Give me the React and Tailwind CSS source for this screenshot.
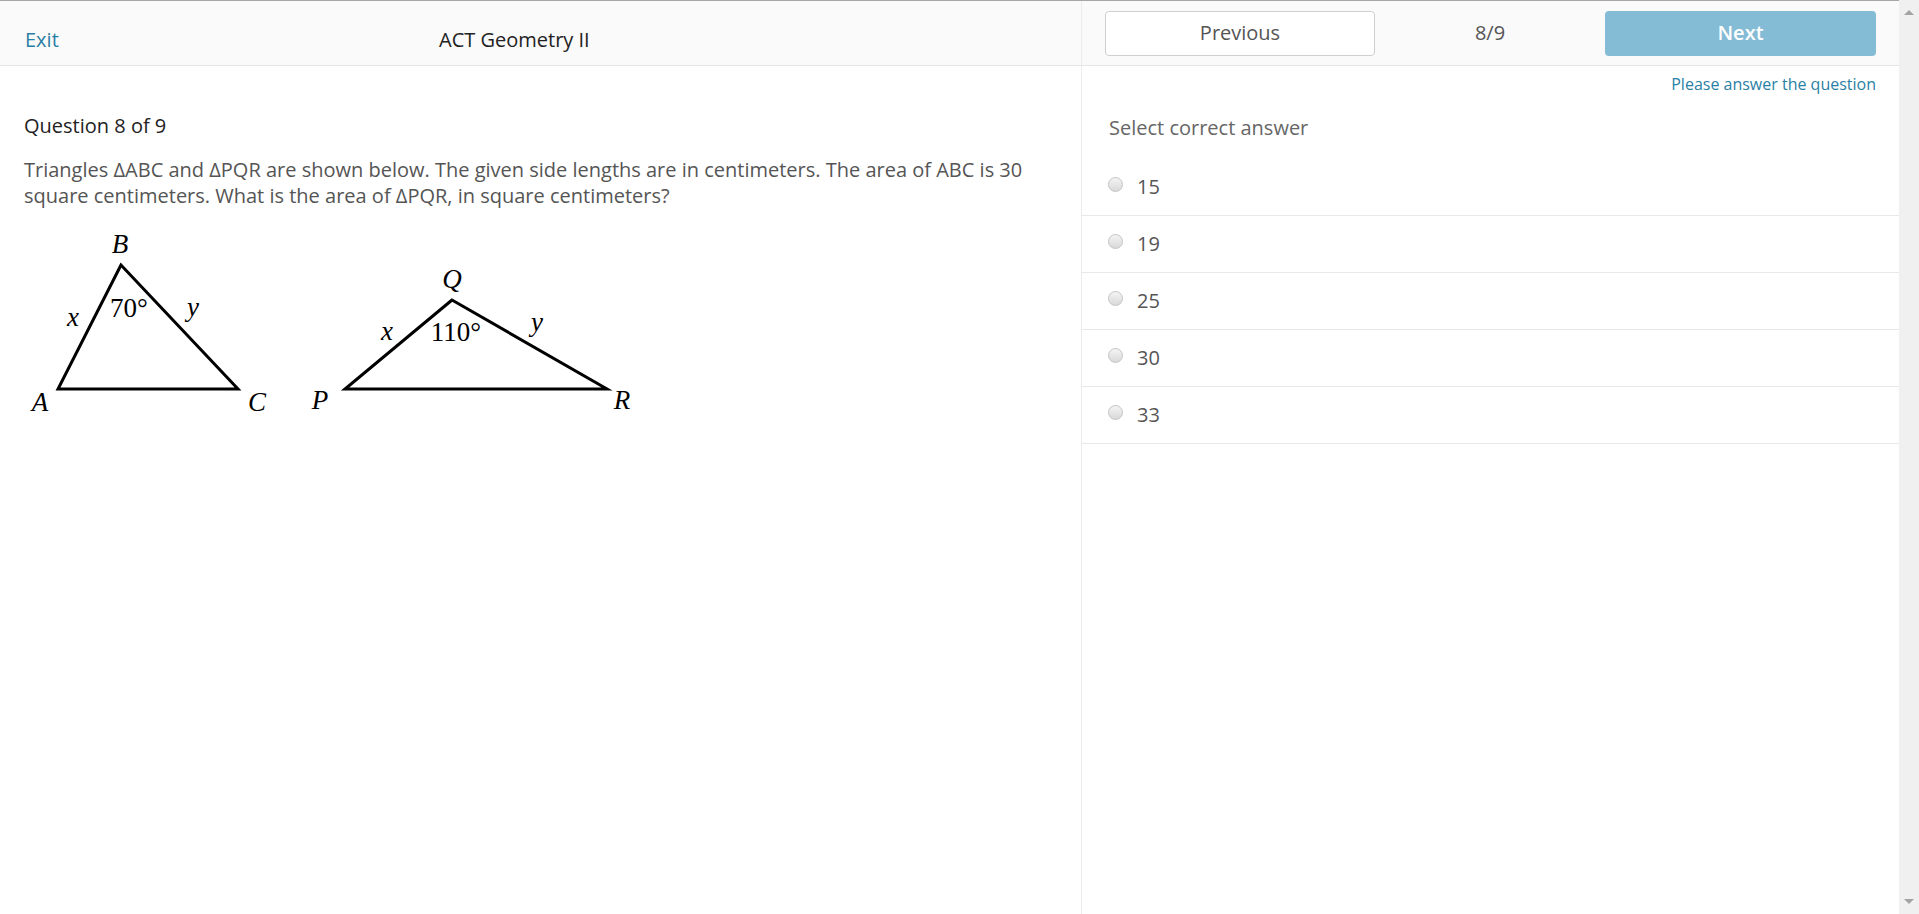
import React from "react";

const answers = ["15", "19", "25", "30", "33"];

const Triangles = () => (
	<svg width="660" height="200" viewBox="0 230 660 200" className="block">
		<g fill="none" stroke="#000" strokeWidth="3" strokeLinejoin="miter">
			<polygon points="121,265 58,389 238,389" />
			<polygon points="452,300 345,389 607,389" />
		</g>
		<g fontFamily="'Liberation Serif', serif" fill="#000" textAnchor="middle" fontSize="27">
			<text x="120" y="253" fontStyle="italic">B</text>
			<text x="40" y="411" fontStyle="italic">A</text>
			<text x="257" y="411" fontStyle="italic">C</text>
			<text x="73" y="326" fontStyle="italic">x</text>
			<text x="193" y="316" fontStyle="italic">y</text>
			<text x="129" y="317">70°</text>
			<text x="452" y="288" fontStyle="italic">Q</text>
			<text x="320" y="409" fontStyle="italic">P</text>
			<text x="622" y="409" fontStyle="italic">R</text>
			<text x="387" y="340" fontStyle="italic">x</text>
			<text x="537" y="331" fontStyle="italic">y</text>
			<text x="456" y="341">110°</text>
		</g>
	</svg>
);

const Radio = () => (
	<span className="w-[15px] h-[15px] rounded-full border border-[#c4c4c4] bg-gradient-to-b from-[#f4f4f4] to-[#d9d9d9] shrink-0 -mt-[6px]"></span>
);

export default function App() {
	return (
		<div className="h-[914px] flex overflow-hidden bg-white font-['Open_Sans',sans-serif]">
			<div className="flex-1 flex flex-col border-t border-[#a6a6a6]">
				{/* top bar */}
				<div className="h-[65px] flex bg-[#fafafa] border-b border-[#e6e6e6] shrink-0">
					<div className="w-[1081px] flex items-center pl-[25px] pt-[13px] text-[20px]">
						<span className="w-[414px] text-[#2a7fa5]">Exit</span>
						<span className="text-[#222]">ACT Geometry II</span>
					</div>
					<div className="flex-1 border-l border-[#ececec] flex items-center justify-between px-[23px]">
						<button className="w-[270px] h-[45px] bg-white border border-[#cfcfcf] rounded-[4px] text-[20px] text-[#555]">
							Previous
						</button>
						<span className="text-[20px] text-[#555]">8/9</span>
						<button className="w-[271px] h-[45px] bg-[#84bbd5] rounded-[4px] text-[20px] font-semibold text-white">
							Next
						</button>
					</div>
				</div>

				{/* body */}
				<div className="flex-1 flex">
					<div className="w-[1081px] pl-[24px] pr-[30px]">
						<h2 className="text-[20px] text-[#222] mt-[47px] leading-[26px]">Question 8 of 9</h2>
						<p className="text-[20px] text-[#555] leading-[26px] mt-[18px]">
							Triangles ΔABC and ΔPQR are shown below. The given side lengths are in centimeters. The area of ABC is 30 square centimeters. What is the area of ΔPQR, in square centimeters?
						</p>
						<div className="-ml-[24px] mt-[21px]">
							<Triangles />
						</div>
					</div>
					<div className="flex-1 border-l border-[#ececec] flex flex-col">
						<div className="h-[93px] flex flex-col">
							<div className="text-right pr-[23px] pt-[6px] text-[16px] text-[#2a7fa5] leading-[24px]">
								Please answer the question
							</div>
							<div className="pl-[27px] mt-[19px] text-[20px] text-[#666] leading-[26px]">Select correct answer</div>
						</div>
						{answers.map((a) => (
							<label key={a} className="h-[57px] flex items-center gap-[14px] pl-[26px] border-b border-[#e8e8e8] text-[20px] text-[#555]">
								<Radio />
								<span>{a}</span>
							</label>
						))}
					</div>
				</div>
			</div>

			{/* scrollbar */}
			<div className="w-[20px] bg-[#f0f0f0] flex flex-col items-center justify-between py-[10px]">
				<span className="w-0 h-0 border-l-[5px] border-r-[5px] border-b-[5px] border-l-transparent border-r-transparent border-b-[#a3a3a3]"></span>
				<span className="w-0 h-0 border-l-[5px] border-r-[5px] border-t-[5px] border-l-transparent border-r-transparent border-t-[#a3a3a3]"></span>
			</div>
		</div>
	);
}
